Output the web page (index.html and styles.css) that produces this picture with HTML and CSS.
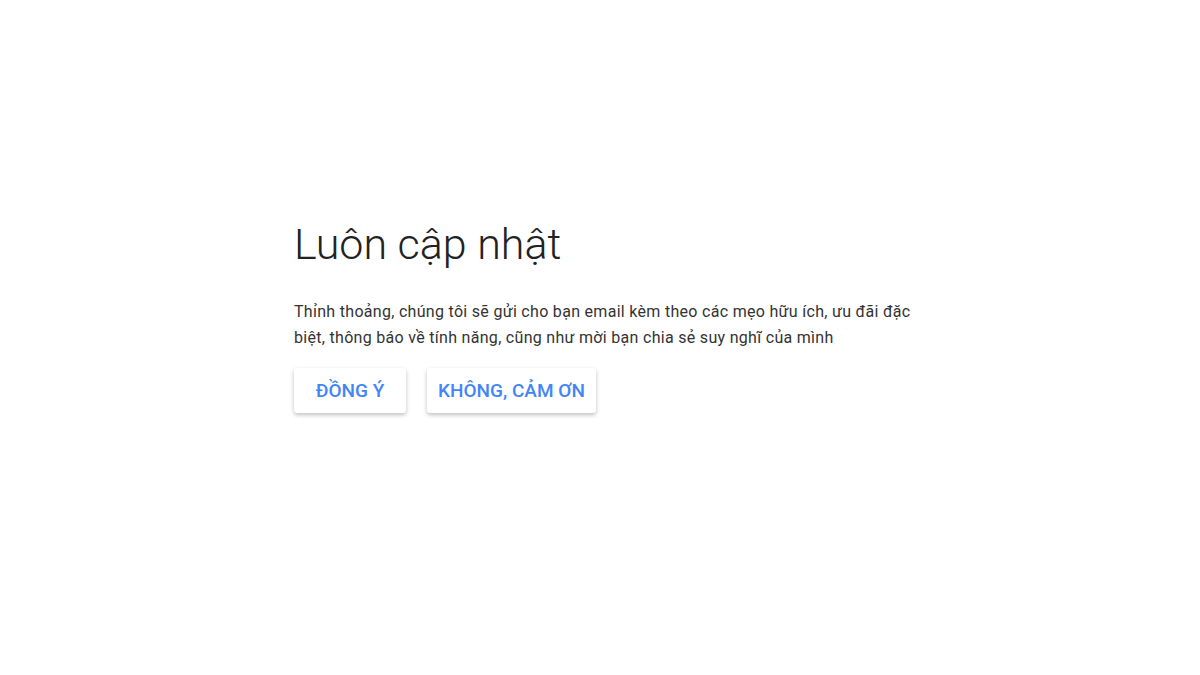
FILE: index.html
```html
<!DOCTYPE html>
<html lang="vi">
<head>
  <meta charset="UTF-8">
  <title>Luôn cập nhật</title>
  <link rel="stylesheet" href="styles.css">
</head>
<body>
  <main class="page">
    <section class="card">
      <h1>Luôn cập nhật</h1>
      <p>Thỉnh thoảng, chúng tôi sẽ gửi cho bạn email kèm theo các mẹo hữu ích, ưu đãi đặc biệt, thông báo về tính năng, cũng như mời bạn chia sẻ suy nghĩ của mình</p>
      <div class="actions">
        <button class="btn">ĐỒNG Ý</button>
        <button class="btn">KHÔNG, CẢM ƠN</button>
      </div>
    </section>
  </main>
</body>
</html>
```

FILE: styles.css
```css
body {
  margin: 0;
  background: #fff;
  font-family: Roboto, "Noto Sans", Arial, sans-serif;
}

.page {
  height: 675px;
  padding-left: 294px;
}

.card {
  width: 635px;
  padding-top: 216px;
}

h1 {
  margin: 0;
  font-size: 43px;
  font-weight: 300;
  color: #222;
  line-height: 56px;
}

p {
  margin: 27px 0 0;
  font-size: 16px;
  letter-spacing: 0.3px;
  line-height: 26px;
  color: #333;
}

.actions {
  display: flex;
  gap: 21px;
  margin-top: 17px;
}

.btn {
  font-family: inherit;
  background: #fff;
  border: none;
  border-radius: 3px;
  box-shadow: 0 2px 4px rgba(0, 0, 0, 0.25);
  color: #4285f4;
  font-size: 19px;
  font-weight: 500;
  height: 45px;
  min-width: 112px;
  padding: 0 11px;
}
```
